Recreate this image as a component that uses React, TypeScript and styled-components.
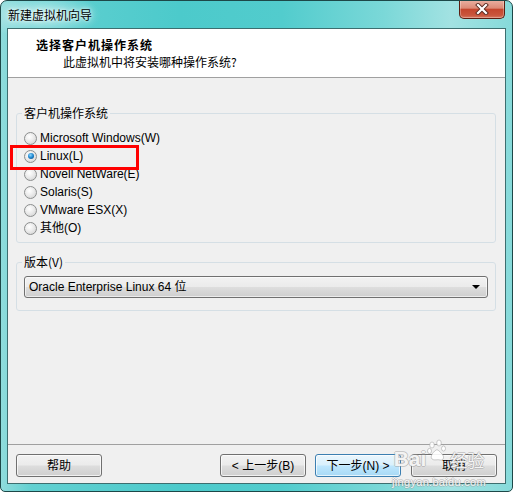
import React from "react";
import styled, { createGlobalStyle, css } from "styled-components";

const Global = createGlobalStyle`
  html, body { margin: 0; padding: 0; background: #ffffff; }
  body {
    font-family: "Liberation Sans", "Noto Sans CJK SC", sans-serif;
    font-size: 12px;
    color: #000;
  }
`;

const Window = styled.div`
  position: relative;
  width: 513px;
  height: 492px;
  box-sizing: border-box;
  display: flex;
  flex-direction: column;
  border: 1px solid #1d4848;
  border-radius: 7px 7px 5px 5px;
  overflow: hidden;
  background:
    radial-gradient(ellipse 60px 24px at 40px 14px, rgba(255,255,255,0.55), rgba(255,255,255,0) 100%),
    linear-gradient(90deg, #8fdcdc 0%, #62d0d1 6%, #4ccacb 35%, #52cccd 55%, #7bd8d8 75%, #a2e2e2 88%, #86dada 100%);
`;

const TitleBar = styled.div`
  height: 27px;
  flex: none;
  display: flex;
  align-items: flex-start;
  padding-left: 7px;
`;

const TitleText = styled.span`
  align-self: center;
  font-family: "Noto Sans CJK SC", sans-serif;
  font-size: 12px;
  line-height: 16px;
  flex: 1;
  text-shadow: 0 0 6px rgba(255,255,255,0.9), 0 0 3px rgba(255,255,255,0.9);
`;

const CloseButton = styled.div`
  width: 46px;
  height: 19px;
  margin-top: -1px;
  margin-right: 7px;
  box-sizing: border-box;
  border: 1px solid #5b1e12;
  border-top: none;
  border-radius: 0 0 5px 5px;
  background: linear-gradient(180deg, #eab1a3 0%, #dc8a77 45%, #c4462e 52%, #c9563d 85%, #d77a62 100%);
  display: flex;
  align-items: center;
  justify-content: center;
  box-shadow: inset 0 0 0 1px rgba(255,255,255,0.3);
`;

const Client = styled.div`
  flex: 1;
  margin: 0 6px 7px 6px;
  border: 1px solid #3d6e6f;
  background: #f0f0f0;
  display: flex;
  flex-direction: column;
  min-height: 0;
`;

const Header = styled.div`
  height: 49px;
  box-sizing: border-box;
  flex: none;
  background: #ffffff;
  border-bottom: 1px solid #a0a0a0;
  padding-top: 8px;
`;

const HeaderTitle = styled.div`
  font-family: "Noto Sans CJK SC", sans-serif;
  font-weight: bold;
  font-size: 12px;
  letter-spacing: 1px;
  line-height: 16px;
  padding-left: 28px;
`;

const HeaderSub = styled.div`
  font-family: "Noto Sans CJK SC", sans-serif;
  font-size: 12px;
  line-height: 16px;
  margin-top: 1px;
  padding-left: 55px;
`;

const Body = styled.div`
  flex: 1;
  padding: 0 9px 0 8px;
  display: flex;
  flex-direction: column;
`;

const Group = styled.fieldset<{ $top: number }>`
  margin: ${(p) => p.$top}px 0 0 0;
  padding: 0;
  border: 1px solid #d5dfe5;
  border-radius: 3px;
  min-width: 0;
`;

const Legend = styled.legend`
  margin-left: 5px;
  padding: 0 2px;
  font-family: "Noto Sans CJK SC", sans-serif;
  font-size: 12px;
  line-height: 16px;
`;

const RadioList = styled.div`
  display: flex;
  flex-direction: column;
  padding: 8px 0 5px 7px;
`;

const RadioRow = styled.label`
  height: 18px;
  display: flex;
  align-items: center;
  gap: 3px;
  line-height: 16px;
`;

const RadioDot = styled.span<{ $checked?: boolean }>`
  position: relative;
  flex: none;
  width: 13px;
  height: 13px;
  box-sizing: border-box;
  border-radius: 50%;
  border: 1px solid #8c8e8e;
  background: radial-gradient(circle at 40% 35%, #ffffff 0%, #ebebeb 45%, #cdcdcd 100%);
  ${(p) =>
    p.$checked &&
    css`
      &::after {
        content: "";
        position: absolute;
        left: 2.5px;
        top: 2.5px;
        width: 6px;
        height: 6px;
        border-radius: 50%;
        background: radial-gradient(circle at 40% 35%, #8fd6ff 0%, #1c86d0 50%, #0d3f6e 100%);
      }
    `}
`;

const VersionBox = styled.div`
  padding: 6px 7px 12px 7px;
`;

const Select = styled.div`
  height: 22px;
  box-sizing: border-box;
  border: 1px solid #707070;
  border-radius: 3px;
  background: linear-gradient(180deg, #f2f2f2 0%, #ebebeb 48%, #dddddd 52%, #cfcfcf 100%);
  display: flex;
  align-items: center;
  padding: 0 7px 0 4px;
  box-shadow: inset 0 0 0 1px rgba(255,255,255,0.6);
`;

const SelectText = styled.span`
  flex: 1;
  line-height: 16px;
`;

const Arrow = styled.span`
  width: 0;
  height: 0;
  border-left: 4px solid transparent;
  border-right: 4px solid transparent;
  border-top: 4px solid #000;
`;

const Footer = styled.div`
  flex: none;
  border-top: 1px solid #a0a0a0;
  padding: 9px 8px 6px 8px;
  display: flex;
  align-items: center;
`;

const Button = styled.div<{ $primary?: boolean; $gap?: number }>`
  width: 86px;
  height: 23px;
  box-sizing: border-box;
  margin-left: ${(p) => p.$gap ?? 0}px;
  border: 1px solid #707070;
  border-radius: 3px;
  display: flex;
  align-items: center;
  justify-content: center;
  font-family: "Liberation Sans", "Noto Sans CJK SC", sans-serif;
  font-size: 12px;
  line-height: 16px;
  background: linear-gradient(180deg, #f2f2f2 0%, #ebebeb 48%, #dddddd 52%, #cfcfcf 100%);
  box-shadow: inset 0 0 0 1px rgba(255,255,255,0.7);
  ${(p) =>
    p.$primary &&
    css`
      border-color: #3c7fb1;
      background: linear-gradient(180deg, #eaf6fd 0%, #d9f0fc 48%, #bee6fd 52%, #a7d9f5 100%);
    `}
  &:first-child { margin-right: auto; }
`;

const Highlight = styled.div`
  position: absolute;
  left: 9px;
  top: 144px;
  width: 129px;
  height: 25px;
  box-sizing: border-box;
  border: 3px solid #ff0000;
  pointer-events: none;
`;

const Watermark = styled.div`
  position: absolute;
  left: 392px;
  top: 438px;
  width: 92px;
  display: flex;
  flex-direction: column;
  align-items: center;
  color: rgba(255,255,255,0.9);
  text-shadow:
    1px 0 0 rgba(150,150,150,0.45),
    -1px 0 0 rgba(150,150,150,0.45),
    0 1px 0 rgba(150,150,150,0.45),
    0 -1px 0 rgba(150,150,150,0.45);
  pointer-events: none;
`;

const WmTop = styled.div`
  display: flex;
  align-items: flex-end;
  font-family: "Liberation Sans", "Noto Sans CJK SC", sans-serif;
  font-size: 21px;
  font-weight: bold;
  line-height: 24px;
  height: 32px;
`;

const WmCn = styled.span`
  font-family: "Noto Sans CJK SC", sans-serif;
  font-size: 17px;
  font-weight: normal;
  line-height: 22px;
  margin-left: 2px;
`;

const WmUrl = styled.div`
  font-family: "Liberation Sans", sans-serif;
  font-size: 11px;
  line-height: 12px;
  margin-top: 5px;
  letter-spacing: 0.3px;
`;

const options = [
  "Microsoft Windows(W)",
  "Linux(L)",
  "Novell NetWare(E)",
  "Solaris(S)",
  "VMware ESX(X)",
  "其他(O)",
];

export default function App() {
  return (
    <>
      <Global />
      <Window>
        <TitleBar>
          <TitleText>新建虚拟机向导</TitleText>
          <CloseButton>
            <svg width="14" height="12" viewBox="0 0 14 12">
              <path d="M3 2 L11 10 M11 2 L3 10" stroke="#5a2a20" strokeWidth="4" strokeLinecap="square" />
              <path d="M3 2 L11 10 M11 2 L3 10" stroke="#ffffff" strokeWidth="2.2" strokeLinecap="square" />
            </svg>
          </CloseButton>
        </TitleBar>
        <Client>
          <Header>
            <HeaderTitle>选择客户机操作系统</HeaderTitle>
            <HeaderSub>此虚拟机中将安装哪种操作系统?</HeaderSub>
          </Header>
          <Body>
            <Group $top={27}>
              <Legend>客户机操作系统</Legend>
              <RadioList>
                {options.map((o, i) => (
                  <RadioRow key={o}>
                    <RadioDot $checked={i === 1} />
                    <span>{o}</span>
                  </RadioRow>
                ))}
              </RadioList>
            </Group>
            <Group $top={11}>
              <Legend>版本(V)</Legend>
              <VersionBox>
                <Select>
                  <SelectText>Oracle Enterprise Linux 64 位</SelectText>
                  <Arrow />
                </Select>
              </VersionBox>
            </Group>
          </Body>
          <Footer>
            <Button>帮助</Button>
            <Button>&lt; 上一步(B)</Button>
            <Button $primary $gap={9}>下一步(N) &gt;</Button>
            <Button $gap={10}>取消</Button>
          </Footer>
        </Client>
        <Highlight />
        <Watermark>
          <WmTop>
            <span>Bai</span>
            <svg width="20" height="26" viewBox="0 0 20 26" style={{ margin: "0 1px", alignSelf: "flex-start" }}>
              <g fill="rgba(255,255,255,0.9)" stroke="rgba(150,150,150,0.6)" strokeWidth="0.8">
                <ellipse cx="5" cy="6" rx="2.3" ry="3" />
                <ellipse cx="12" cy="4" rx="2.3" ry="3" />
                <ellipse cx="2.5" cy="12" rx="2" ry="2.6" />
                <ellipse cx="16.5" cy="9.5" rx="2" ry="2.6" />
                <path d="M9 11 C5 14 3 18 5 20 C7 22 11 20 13 21 C16 22 18 18 15 15 C13 13 11 10 9 11 Z" />
              </g>
            </svg>
            <WmCn>经验</WmCn>
          </WmTop>
          <WmUrl>jingyan.baidu.com</WmUrl>
        </Watermark>
      </Window>
    </>
  );
}
